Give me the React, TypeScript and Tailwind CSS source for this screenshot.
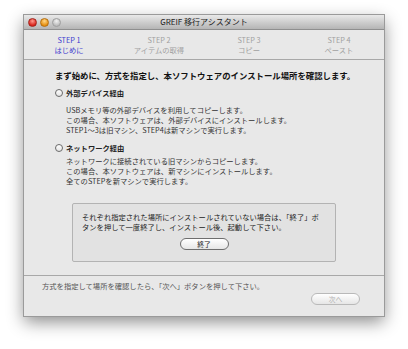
import React from "react";

const font = { fontFamily: '"Noto Sans CJK JP", "Noto Sans", sans-serif' };

function Step({ n, label, active }: { n: string; label: string; active?: boolean }) {
  return (
    <div className={`flex flex-1 flex-col items-center text-[7.3px] leading-[10px] ${active ? "text-[#3d3dcf]" : "text-[#a0a0a0]"}`}>
      <div>STEP {n}</div>
      <div>{label}</div>
    </div>
  );
}

function Radio({ label }: { label: string }) {
  return (
    <div className="flex items-center h-[10px]">
      <div className="w-[8px] h-[8px] rounded-full border border-[#6a6a6a] bg-gradient-to-b from-[#ffffff] to-[#e4e4e4]" />
      <div className="ml-[3px] text-[7.3px] font-bold text-[#222]">{label}</div>
    </div>
  );
}

function Btn({ label, disabled }: { label: string; disabled?: boolean }) {
  return (
    <div
      className={`w-[49px] h-[12px] rounded-full border flex items-center justify-center text-[6.8px] leading-none bg-gradient-to-b from-[#ffffff] to-[#e6e6e6] ${
        disabled ? "border-[#b9b9b9] text-[#b0b0b0]" : "border-[#6e6e6e] text-[#222]"
      }`}
    >
      {label}
    </div>
  );
}

export default function App() {
  return (
    <div className="w-[408px] h-[349px] bg-white pt-[15px] pl-[24px]" style={font}>
      <div className="w-[360px] h-[301px] bg-[#e8e8e8] flex flex-col shadow-[0_6px_16px_rgba(0,0,0,0.45)] outline outline-1 outline-[#9a9a9a]">
        <div className="h-[15px] bg-gradient-to-b from-[#e9e9e9] to-[#b5b5b5] flex items-center relative border-b border-[#8f8f8f]">
          <div className="flex gap-[3px] pl-[4px] absolute left-0 top-[3px]">
            <div className="w-[9px] h-[9px] rounded-full bg-[radial-gradient(circle_at_50%_30%,#ff9a8f,#d8241c_70%)] border border-[#a3231c]" />
            <div className="w-[9px] h-[9px] rounded-full bg-[radial-gradient(circle_at_50%_30%,#ffd88a,#e68e0e_70%)] border border-[#b36e10]" />
            <div className="w-[9px] h-[9px] rounded-full bg-[radial-gradient(circle_at_50%_30%,#f2f2f2,#bdbdbd_70%)] border border-[#9e9e9e]" />
          </div>
          <div className="w-full text-center text-[8px] text-[#222] leading-none">GREIF 移行アシスタント</div>
        </div>
        <div className="h-[30px] flex items-center border-b border-[#a8a8a8] pt-[1px]">
          <Step n="1" label="はじめに" active />
          <Step n="2" label="アイテムの取得" />
          <Step n="3" label="コピー" />
          <Step n="4" label="ペースト" />
        </div>
        <div className="flex-1 pl-[31px] pt-[10px] flex flex-col">
          <div className="text-[8.4px] font-bold leading-[10px] text-[#111]">
            まず始めに、方式を指定し、本ソフトウェアのインストール場所を確認します。
          </div>
          <div className="mt-[8px]">
            <Radio label="外部デバイス経由" />
          </div>
          <div className="mt-[7px] ml-[11px] text-[7.3px] leading-[10px] text-[#333]">
            <div>USBメモリ等の外部デバイスを利用してコピーします。</div>
            <div>この場合、本ソフトウェアは、外部デバイスにインストールします。</div>
            <div>STEP1～3は旧マシン、STEP4は新マシンで実行します。</div>
          </div>
          <div className="mt-[8px]">
            <Radio label="ネットワーク経由" />
          </div>
          <div className="mt-[3px] ml-[11px] text-[7.3px] leading-[10px] text-[#333]">
            <div>ネットワークに接続されている旧マシンからコピーします。</div>
            <div>この場合、本ソフトウェアは、新マシンにインストールします。</div>
            <div>全てのSTEPを新マシンで実行します。</div>
          </div>
          <div className="mt-[17px] ml-[17px] w-[264px] h-[59px] bg-[#e2e2e2] border border-[#b3b3b3] rounded-[2px] flex flex-col items-center pt-[8px]">
            <div className="w-[244px] text-[7.3px] leading-[10px] text-[#222]">
              <div>それぞれ指定された場所にインストールされていない場合は、「終了」ボ</div>
              <div>タンを押して一度終了し、インストール後、起動して下さい。</div>
            </div>
            <div className="mt-[6px]">
              <Btn label="終了" />
            </div>
          </div>
        </div>
        <div className="h-[41px] border-t border-[#a8a8a8] flex flex-col pl-[18px] pr-[24px]">
          <div className="mt-[5px] text-[7.3px] leading-[10px] text-[#555]">
            方式を指定して場所を確認したら、「次へ」ボタンを押して下さい。
          </div>
          <div className="mt-[2px] self-end">
            <Btn label="次へ" disabled />
          </div>
        </div>
      </div>
    </div>
  );
}
